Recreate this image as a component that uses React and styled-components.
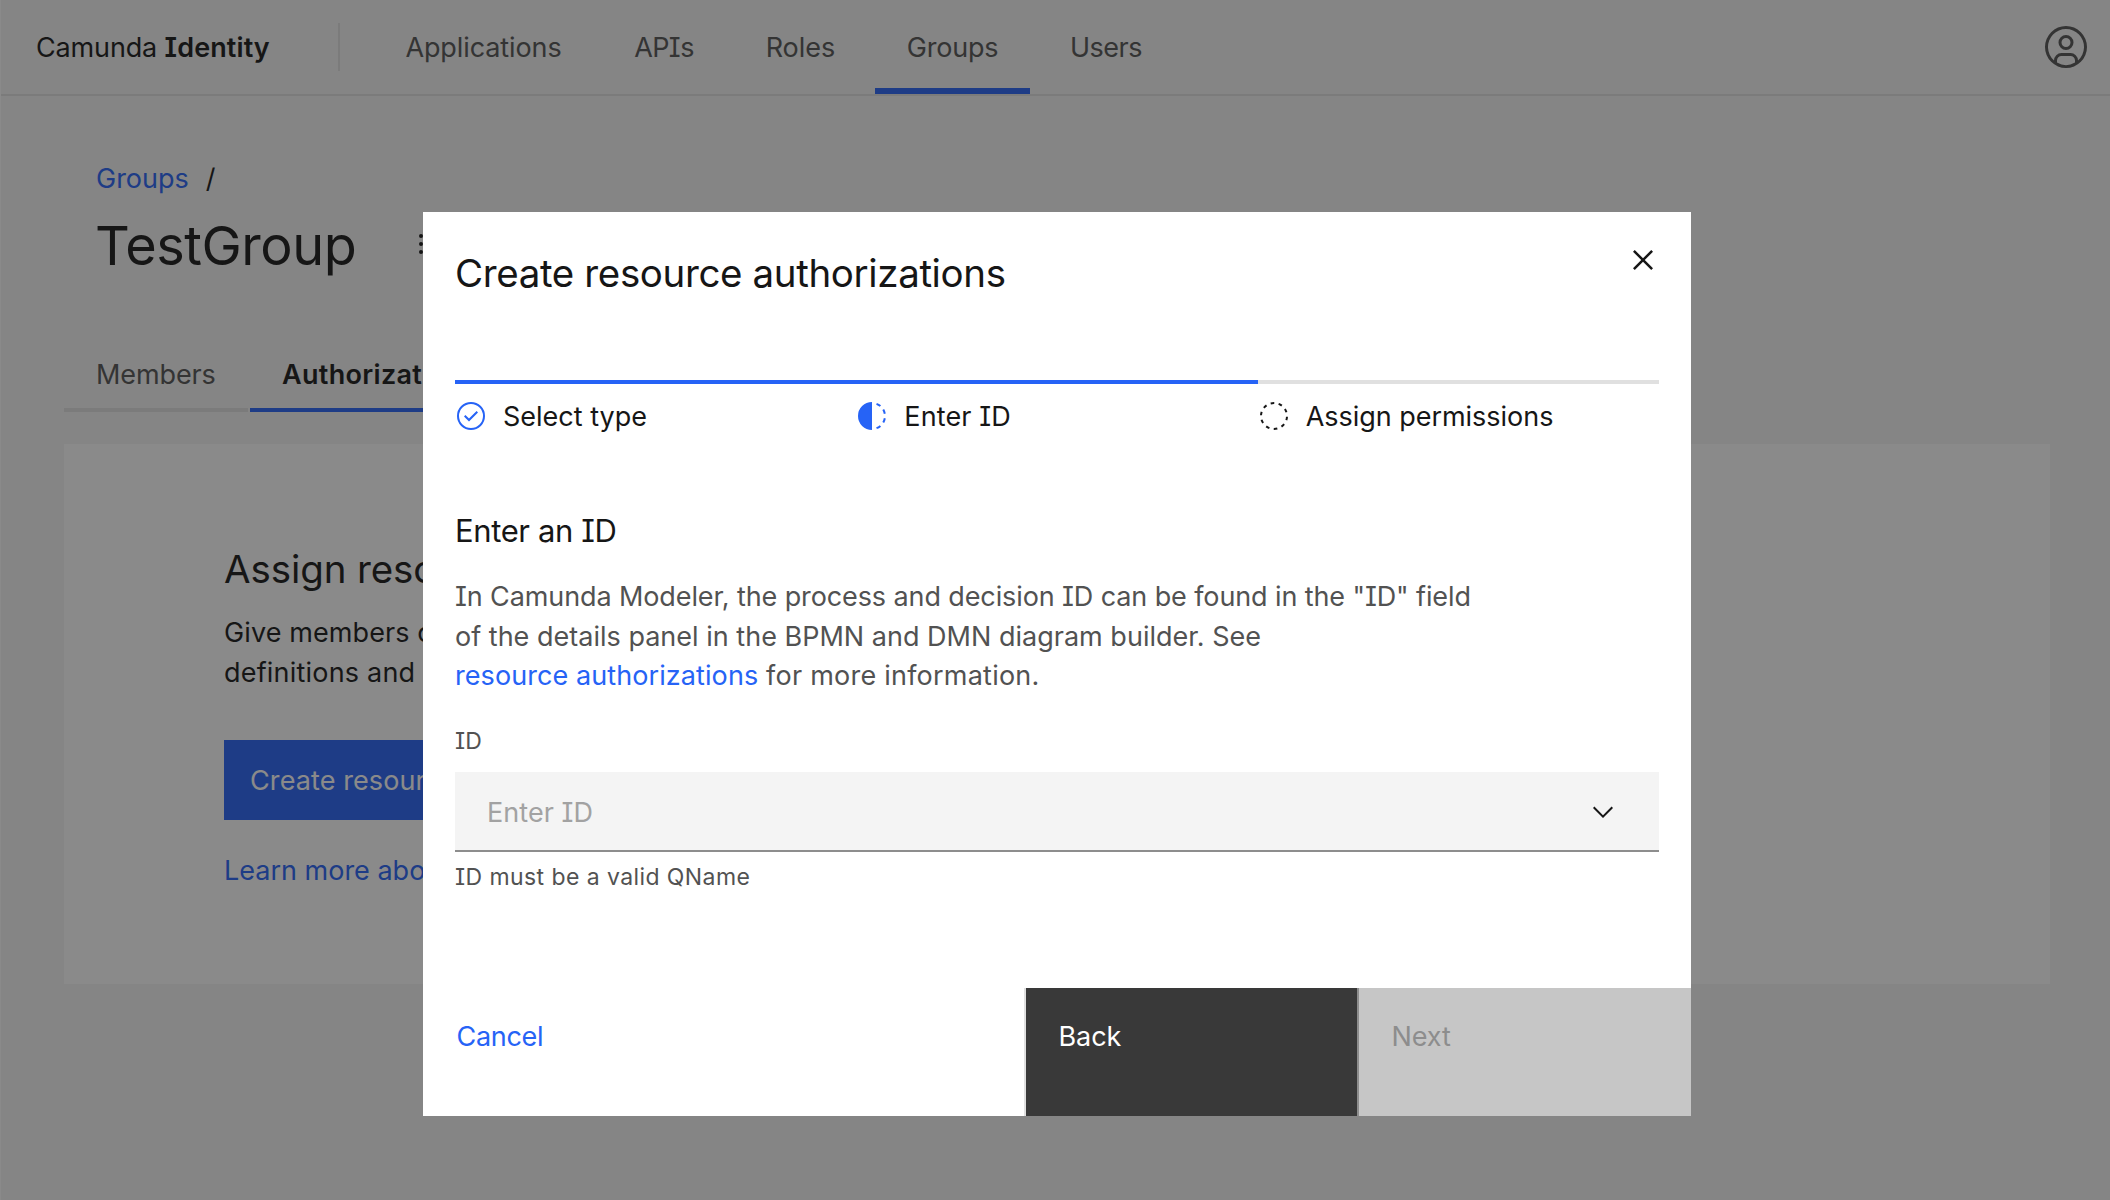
import React from "react";
import styled, { createGlobalStyle, css } from "styled-components";

const c = {
  ink: "#161616",
  muted: "#525252",
  blue: "#2663f6",
  line: "#e0e0e0",
  layer: "#f4f4f4",
  grey: "#8d8d8d",
};

const GlobalStyle = createGlobalStyle`
  * { box-sizing: border-box; }
  body {
    margin: 0;
    background: ${c.layer};
    color: ${c.ink};
    font-family: Inter, "Liberation Sans", sans-serif;
    font-feature-settings: "cv08" 1;
    font-size: 27px;
    line-height: 36px;
    overflow: hidden;
  }
`;

const Text = styled.span`
  letter-spacing: ${(p) => p.$ls || 0}px;
  font-weight: ${(p) => (p.$bold ? 600 : 400)};
  white-space: pre;
`;

const Page = styled.div`
  height: 1200px;
  border-left: 1px solid #fff;
`;

const Header = styled.header`
  height: 96px;
  border-bottom: 2px solid ${c.line};
  display: flex;
  align-items: center;
  padding: 0 20px 0 35px;
`;

const Brand = styled.div`
  width: 302px;
  padding-top: 2px;
  white-space: pre;
`;

const Divider = styled.div`
  width: 2px;
  height: 48px;
  background: ${c.line};
`;

const Nav = styled.nav`
  display: flex;
  align-self: stretch;
  gap: 8px;
  margin-left: 33px;
  flex: 1;
`;

const NavItem = styled.a`
  width: ${(p) => p.$w}px;
  display: flex;
  align-items: center;
  justify-content: center;
  color: ${c.muted};
  border-top: 8px solid transparent;
  border-bottom: 6px solid ${(p) => (p.$active ? c.blue : "transparent")};
`;

const Main = styled.main`
  padding: 65px 60px 0 63px;
`;

const Breadcrumb = styled.div`
  display: flex;
  gap: 17px;
  padding-left: 32px;
`;

const Link = styled.a`
  color: ${c.blue};
`;

const TitleRow = styled.div`
  display: flex;
  align-items: center;
  margin-top: 13px;
  padding: 0 0 0 31px;
`;

const Title = styled.h1`
  margin: 0;
  width: 310px;
  font-size: 54px;
  line-height: 72px;
`;

const Tabs = styled.div`
  display: flex;
  gap: 2px;
  margin-top: 34px;
`;

const Tab = styled.div`
  height: 96px;
  width: ${(p) => p.$w}px;
  padding: 41px 0 0 32px;
  color: ${(p) => (p.$active ? c.ink : c.muted)};
  border-bottom: 4px solid ${(p) => (p.$active ? c.blue : c.line)};
`;

const Panel = styled.section`
  margin-top: 32px;
  height: 540px;
  padding: 97px 0 0 160px;
  background: #fff;
`;

const PanelTitle = styled.h2`
  margin: 0;
  font-size: 38.5px;
  line-height: 56px;
`;

const PanelText = styled.p`
  margin: 16px 0 47px;
  line-height: 40px;
`;

const PrimaryButton = styled.div`
  width: 430px;
  height: 80px;
  padding: 2px 25px 0 26px;
  display: flex;
  align-items: center;
  background: ${c.blue};
  color: #fff;
`;

const PanelLink = styled(Link)`
  display: block;
  margin-top: 31px;
  line-height: 40px;
`;

const Overlay = styled.div`
  position: fixed;
  inset: 0;
  padding: 212px 0 0 423px;
  background: rgba(22, 22, 22, 0.5);
`;

const Modal = styled.div`
  width: 1268px;
  height: 904px;
  display: flex;
  flex-direction: column;
  background: #fff;
`;

const ModalHeader = styled.div`
  height: 168px;
  display: flex;
  justify-content: space-between;
  align-items: flex-start;
  padding: 28px 28px 0 32px;
`;

const ModalTitle = styled.h2`
  margin: 5px 0 0;
  font-size: 38.5px;
  line-height: 56px;
`;

const Steps = styled.div`
  display: grid;
  grid-template-columns: repeat(3, 1fr);
  margin: 0 32px;
`;

const Step = styled.div`
  height: 52px;
  display: flex;
  gap: 16px;
  padding-top: 16px;
  line-height: 34px;
  border-top: 4px solid ${(p) => (p.$done ? c.blue : c.line)};
  color: ${c.ink};
`;

const Body = styled.div`
  padding: 79px 32px 0;
`;

const BodyTitle = styled.h3`
  margin: 0;
  font-size: 31px;
  line-height: 40px;
`;

const BodyText = styled.p`
  margin: 26px 0 29.5px;
  line-height: 39.5px;
  color: ${c.muted};
`;

const Small = styled.div`
  font-size: 23px;
  line-height: 32px;
  color: ${c.muted};
`;

const Field = styled.div`
  display: flex;
  align-items: center;
  justify-content: space-between;
  height: 80px;
  margin: 15px 0 9px;
  padding: 2px 40px 0 32px;
  background: ${c.layer};
  border-bottom: 2px solid ${c.grey};
`;

const Placeholder = styled.div`
  padding-top: 2px;
  color: #a2a2a2;
`;

const Footer = styled.div`
  display: flex;
  height: 128px;
  margin-top: auto;
`;

const variants = {
  ghost: css`
    flex: 1;
    padding-left: 33.5px;
    color: ${c.blue};
  `,
  secondary: css`
    width: 333px;
    background: #393939;
    color: #fff;
    border-left: 2px solid ${c.line};
  `,
  disabled: css`
    width: 334px;
    background: #c6c6c6;
    color: ${c.grey};
    border-left: 2px solid ${c.grey};
  `,
};

const FooterButton = styled.div`
  padding: 31px 0 0 32.5px;
  ${(p) => variants[p.$variant]}
`;

const Icon = styled.svg`
  width: ${(p) => p.$size}px;
  height: ${(p) => p.$size}px;
  flex: none;
  fill: currentColor;
  color: ${(p) => p.$color || c.ink};
`;

const MenuIcon = styled(Icon)`
  margin-bottom: 4px;
`;

const navItems = [
  { label: "Applications", w: 221, ls: -0.1 },
  { label: "APIs", w: 124, ls: -0.6 },
  { label: "Roles", w: 133, ls: 0 },
  { label: "Groups", w: 155, ls: -0.2, active: true },
  { label: "Users", w: 136, ls: -0.5 },
];

export default function App() {
  return (
    <>
      <GlobalStyle />
      <Page>
        <Header>
          <Brand>
            <Text $ls={-0.15}>Camunda </Text>
            <Text $bold $ls={0.1}>Identity</Text>
          </Brand>
          <Divider />
          <Nav>
            {navItems.map((n) => (
              <NavItem key={n.label} $w={n.w} $active={n.active}>
                <Text $ls={n.ls}>{n.label}</Text>
              </NavItem>
            ))}
          </Nav>
          <Icon $size={48} $color={c.muted} viewBox="0 0 32 32">
            <path d="M16 8a5 5 0 1 0 5 5A5 5 0 0 0 16 8Zm0 8a3 3 0 1 1 3-3A3.0034 3.0034 0 0 1 16 16Z" />
            <path d="M16 2A14 14 0 1 0 30 16 14.0158 14.0158 0 0 0 16 2ZM10 26.3765V25a3.0033 3.0033 0 0 1 3-3h6a3.0033 3.0033 0 0 1 3 3v1.3765a11.8989 11.8989 0 0 1-12 0Zm13.9925-1.4507A5.0016 5.0016 0 0 0 19 20H13a5.0016 5.0016 0 0 0-4.9925 4.9258 12 12 0 1 1 15.985 0Z" />
          </Icon>
        </Header>
        <Main>
          <Breadcrumb>
            <Link><Text>Groups</Text></Link>
            <Text>/</Text>
          </Breadcrumb>
          <TitleRow>
            <Title><Text $ls={-0.45}>TestGroup</Text></Title>
            <MenuIcon $size={32} viewBox="0 0 32 32">
              <circle cx="16" cy="8" r="2" />
              <circle cx="16" cy="16" r="2" />
              <circle cx="16" cy="24" r="2" />
            </MenuIcon>
          </TitleRow>
          <Tabs>
            <Tab $w={184}><Text $ls={-0.1}>Members</Text></Tab>
            <Tab $w={260} $active><Text $bold $ls={0.3}>Authorizat</Text></Tab>
          </Tabs>
          <Panel>
            <PanelTitle><Text $ls={-0.1}>Assign reso</Text></PanelTitle>
            <PanelText>
              <Text $ls={0.1}>Give members o</Text>
              <br />
              <Text $ls={0.2}>definitions and</Text>
            </PanelText>
            <PrimaryButton><Text $ls={0.1}>Create resour</Text></PrimaryButton>
            <PanelLink><Text>Learn more abo</Text></PanelLink>
          </Panel>
        </Main>
      </Page>
      <Overlay>
        <Modal>
          <ModalHeader>
            <ModalTitle><Text $ls={-0.37}>Create resource authorizations</Text></ModalTitle>
            <Icon $size={40} viewBox="0 0 32 32">
              <path d="M17.4141 16 24 9.4141 22.5859 8 16 14.5859 9.4143 8 8 9.4141 14.5859 16 8 22.5859 9.4143 24 16 17.4141 22.5859 24 24 22.5859z" />
            </Icon>
          </ModalHeader>
          <Steps>
            <Step $done>
              <Icon $size={32} $color={c.blue} viewBox="0 0 32 32">
                <path d="M14 21.414 9 16.413 10.413 15 14 18.586 21.585 11 23 12.415z" />
                <path d="M16 2a14 14 0 1 0 14 14A14 14 0 0 0 16 2Zm0 26a12 12 0 1 1 12-12 12 12 0 0 1-12 12Z" />
              </Icon>
              <Text>Select type</Text>
            </Step>
            <Step $done>
              <Icon $size={32} $color={c.blue} viewBox="0 0 32 32">
                <path d="M23.7642 6.8593l1.2851-1.5315A13.976 13.976 0 0 0 20.8672 2.887l-.6836 1.8776A11.9729 11.9729 0 0 1 23.7642 6.8593zM27.81 14l1.9677-.4128A13.8888 13.8888 0 0 0 28.14 9.0457L26.4087 10A12.52 12.52 0 0 1 27.81 14zM20.1836 27.2354l.6836 1.8776a13.976 13.976 0 0 0 4.1821-2.4408l-1.2851-1.5315A11.9729 11.9729 0 0 1 20.1836 27.2354zM26.4087 22L28.14 23a14.14 14.14 0 0 0 1.6382-4.5872L27.81 18.0659A12.1519 12.1519 0 0 1 26.4087 22zM16 30V2a14 14 0 0 0 0 28z" />
              </Icon>
              <Text $ls={0.1}>Enter ID</Text>
            </Step>
            <Step>
              <Icon $size={32} viewBox="0 0 32 32">
                <circle
                  cx="16"
                  cy="16"
                  r="13"
                  fill="none"
                  stroke="currentColor"
                  strokeWidth="2"
                  pathLength="360"
                  strokeDasharray="16 20"
                  transform="rotate(3 16 16)"
                />
              </Icon>
              <Text $ls={-0.03}>Assign permissions</Text>
            </Step>
          </Steps>
          <Body>
            <BodyTitle><Text $ls={-0.38}>Enter an ID</Text></BodyTitle>
            <BodyText>
              <Text $ls={-0.11}>{'In Camunda Modeler, the process and decision ID can be found in the "ID" field'}</Text>
              <br />
              <Text $ls={0.01}>of the details panel in the BPMN and DMN diagram builder. See</Text>
              <br />
              <Link><Text $ls={0.08}>resource authorizations</Text></Link>
              <Text $ls={0.23}> for more information.</Text>
            </BodyText>
            <Small><Text>ID</Text></Small>
            <Field>
              <Placeholder><Text $ls={0.05}>Enter ID</Text></Placeholder>
              <Icon $size={32} viewBox="0 0 16 16">
                <path d="M8 11 3 6l.7-.7L8 9.6l4.3-4.3.7.7z" />
              </Icon>
            </Field>
            <Small><Text $ls={0.42}>ID must be a valid QName</Text></Small>
          </Body>
          <Footer>
            <FooterButton $variant="ghost"><Text $ls={-0.3}>Cancel</Text></FooterButton>
            <FooterButton $variant="secondary"><Text $ls={-0.1}>Back</Text></FooterButton>
            <FooterButton $variant="disabled"><Text $ls={-0.1}>Next</Text></FooterButton>
          </Footer>
        </Modal>
      </Overlay>
    </>
  );
}
